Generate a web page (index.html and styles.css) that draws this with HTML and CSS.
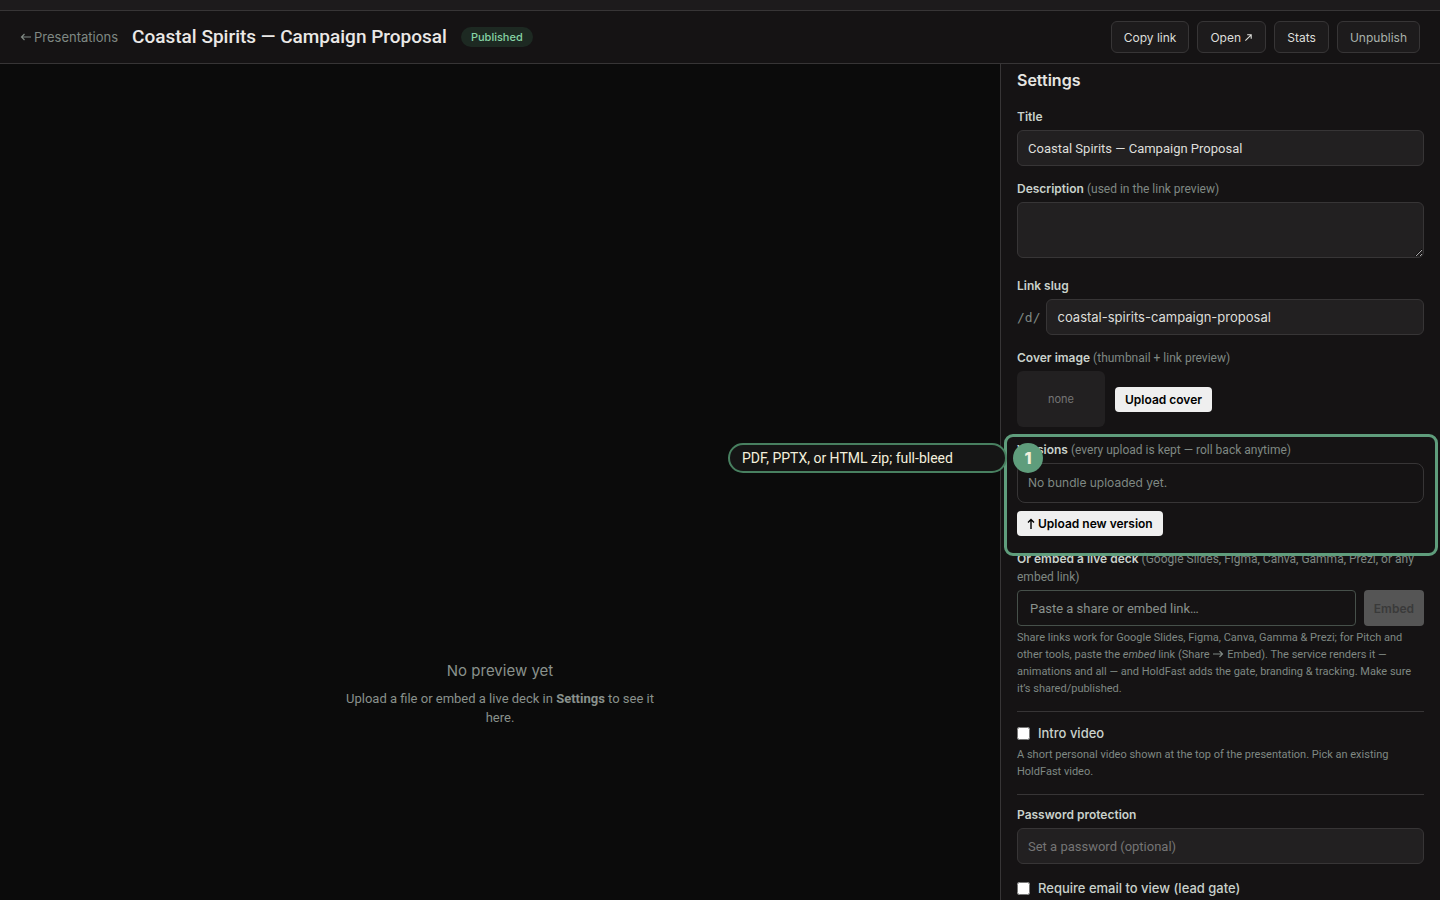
FILE: index.html
```html
<!DOCTYPE html>
<html lang="en">
<head>
<meta charset="utf-8">
<title>Coastal Spirits — Campaign Proposal</title>
<link rel="stylesheet" href="styles.css">
</head>
<body>
<div class="top-strip"></div>
<header class="bar">
  <a class="back" href="#"><svg class="arrow" viewBox="0 0 12 12"><path d="M11 6H1.5M4.5 3L1.5 6l3 3"/></svg>Presentations</a>
  <h1 class="bar-title">Coastal Spirits — Campaign Proposal</h1>
  <span class="badge">Published</span>
  <div class="actions">
    <button class="btn" type="button">Copy link</button>
    <button class="btn" type="button">Open <svg class="arrow-out" viewBox="0 0 10 10"><path d="M1.5 8.5L8 2M3.5 2H8v4.5"/></svg></button>
    <button class="btn" type="button">Stats</button>
    <button class="btn btn-muted" type="button">Unpublish</button>
  </div>
</header>
<main class="workspace">
  <section class="stage">
    <div class="empty">
      <h2 class="empty-title">No preview yet</h2>
      <p class="empty-text">Upload a file or embed a live deck in <strong>Settings</strong> to see it here.</p>
    </div>
  </section>
  <aside class="panel">
    <h2 class="panel-title">Settings</h2>
    <div class="field">
      <label class="label" for="title">Title</label>
      <input class="input" id="title" type="text" value="Coastal Spirits — Campaign Proposal">
    </div>
    <div class="field field-area">
      <label class="label" for="desc">Description <span class="hint">(used in the link preview)</span></label>
      <textarea class="input area" id="desc"></textarea>
    </div>
    <div class="field">
      <label class="label" for="slug">Link slug</label>
      <div class="row slug-row">
        <span class="prefix">/d/</span>
        <input class="input slug-input" id="slug" type="text" value="coastal-spirits-campaign-proposal">
      </div>
    </div>
    <div class="field">
      <div class="label">Cover image <span class="hint">(thumbnail + link preview)</span></div>
      <div class="row cover-row">
        <div class="thumb">none</div>
        <button class="solid" type="button">Upload cover</button>
      </div>
    </div>
    <div class="field versions">
      <div class="label">Versions <span class="hint">(every upload is kept — roll back anytime)</span></div>
      <div class="bundle">No bundle uploaded yet.</div>
      <button class="solid upload" type="button"><svg class="arrow-up" viewBox="0 0 8 12"><path d="M4 11V1.5M1 4.5l3-3 3 3"/></svg>Upload new version</button>
      <div class="callout">
        <span class="callout-num">1</span>
        <span class="callout-text">PDF, PPTX, or HTML zip; full-bleed</span>
      </div>
    </div>
    <div class="field">
      <label class="label" for="embed">Or embed a live deck <span class="hint">(Google Slides, Figma, Canva, Gamma, Prezi, or any embed link)</span></label>
      <div class="row embed-row">
        <input class="input outline" id="embed" type="text" placeholder="Paste a share or embed link…">
        <button class="solid" type="button" disabled>Embed</button>
      </div>
      <p class="help">Share links work for Google Slides, Figma, Canva, Gamma &amp; Prezi; for Pitch and other tools, paste the <em>embed</em> link (Share <svg class="arrow-right" viewBox="0 0 12 8"><path d="M1 4h9.5M7.5 1l3 3-3 3"/></svg> Embed). The service renders it — animations and all — and HoldFast adds the gate, branding &amp; tracking. Make sure it’s shared/published.</p>
    </div>
    <div class="field ruled">
      <label class="check"><input type="checkbox">Intro video</label>
      <p class="help">A short personal video shown at the top of the presentation. Pick an existing HoldFast video.</p>
    </div>
    <div class="field ruled">
      <label class="label" for="pass">Password protection</label>
      <input class="input" id="pass" type="text" placeholder="Set a password (optional)">
    </div>
    <label class="check"><input type="checkbox">Require email to view (lead gate)</label>
  </aside>
</main>
</body>
</html>
```
FILE: styles.css
```css
* { box-sizing: border-box; }
body {
  margin: 0;
  height: 100vh;
  overflow: hidden;
  display: flex;
  flex-direction: column;
  background: #0b0b0b;
  color: #e6e6e2;
  font-family: Inter, "Liberation Sans", sans-serif;
  font-size: 13px;
}
h1, h2, p { margin: 0; }
button, input, textarea { font-family: inherit; }
svg { fill: none; stroke: currentColor; stroke-width: 1.2; }
.bar-title, .hint, .help, .input, .empty-text { font-family: Roboto, "Liberation Sans", sans-serif; }
.top-strip { flex: none; height: 10px; background: #1d1b1c; }
.bar {
  flex: none;
  display: flex;
  align-items: center;
  height: 54px;
  padding: 0 20px;
  gap: 14px;
  background: #151314;
  border-top: 1px solid #373536;
  border-bottom: 1px solid #373536;
}
.back { display: flex; align-items: center; gap: 2px; color: #7f8883; font-size: 13px; text-decoration: none; }
.arrow { width: 12px; height: 12px; }
.bar-title { font-size: 19px; font-weight: 500; line-height: 24px; color: #eae8e6; }
.badge {
  padding: 0 10px;
  border-radius: 10px;
  background: #1d2922;
  color: #86d3a5;
  font-size: 11px;
  font-weight: 500;
  line-height: 20px;
}
.actions { display: flex; gap: 8px; margin-left: auto; }
.btn {
  height: 32px;
  padding: 0 12px;
  border: 1px solid #373536;
  border-radius: 6px;
  background: #1d1b1c;
  color: #dededa;
  font-size: 12px;
}
.btn-muted { color: #a9b1ab; }
.arrow-out { width: 9px; height: 9px; }
.workspace { flex: 1; min-height: 0; display: flex; }
.stage { flex: 1; display: flex; justify-content: center; padding-top: 596px; text-align: center; color: #89918c; }
.empty { width: 320px; }
.empty-title { font-size: 15px; font-weight: 400; line-height: 22px; color: #89918c; }
.empty-text { margin-top: 7px; font-size: 13px; line-height: 19px; }
.panel {
  flex: none;
  width: 440px;
  padding: 4px 16px 0;
  background: #151314;
  border-left: 1px solid #373536;
}
.panel-title { font-size: 16px; font-weight: 600; line-height: 24px; margin-bottom: 16px; }
.field { margin-bottom: 14px; }
.field-area { margin-bottom: 19px; }
.label { display: block; margin-bottom: 4px; font-size: 12px; font-weight: 600; line-height: 18px; color: #c9d1cb; }
.hint { font-weight: 400; color: #7f8883; }
.input {
  display: block;
  width: 100%;
  height: 36px;
  padding: 0 10px;
  border: 1px solid #373536;
  border-radius: 6px;
  background: #222021;
  color: #dededa;
  font-size: 13px;
}
.input::placeholder { color: #757575; opacity: 1; }
.area { height: 56px; resize: vertical; }
.row { display: flex; align-items: center; }
.slug-row { gap: 6px; }
.slug-input { font-family: Inter, "Liberation Sans", sans-serif; }
.prefix { font-family: "DejaVu Sans Mono", monospace; font-size: 13px; color: #7f8883; }
.cover-row { gap: 10px; }
.thumb {
  display: grid;
  place-items: center;
  width: 88px;
  height: 56px;
  border-radius: 6px;
  background: #222021;
  color: #757575;
  font-size: 11px;
}
.solid {
  height: 25px;
  padding: 0 10px;
  border: 0;
  border-radius: 4px;
  background: #efefef;
  color: #000;
  font-size: 12px;
  font-weight: 600;
}
.solid:disabled { height: 36px; background: #555; color: #3a3a3a; }
.versions { position: relative; }
.bundle { padding: 0 10px; border: 1px solid #373536; border-radius: 8px; line-height: 38px; font-size: 12px; color: #7f8883; }
.upload { display: flex; align-items: center; gap: 3px; margin-top: 8px; }
.arrow-up { width: 8px; height: 12px; stroke-width: 1.4; }
.callout {
  position: absolute;
  top: -7px;
  right: -14px;
  bottom: -20px;
  left: -13px;
  border: 3px solid #5f9d7c;
  border-radius: 9px;
}
.callout-num {
  position: absolute;
  top: 6px;
  left: 6px;
  width: 30px;
  height: 30px;
  border-radius: 50%;
  background: #5f9d7c;
  color: #f3efdc;
  font-size: 16px;
  font-weight: 800;
  line-height: 30px;
  text-align: center;
}
.callout-text {
  position: absolute;
  top: 6px;
  right: 100%;
  width: 279px;
  padding: 0 12px;
  border: 2px solid #488060;
  border-radius: 15px;
  background: #151515;
  color: #f3efdc;
  font-family: Roboto, "Liberation Sans", sans-serif;
  font-size: 14px;
  line-height: 26px;
  white-space: nowrap;
}
.embed-row { gap: 8px; }
.outline { flex: 1; padding: 0 12px; border-color: #46504a; border-radius: 4px; background: transparent; }
.outline::placeholder { color: #89918c; }
.help { margin-top: 3px; font-size: 11px; line-height: 17px; color: #7f8883; }
.arrow-right { width: 12px; height: 8px; }
.ruled { padding-top: 11px; border-top: 1px solid #373536; }
.check { display: flex; align-items: center; gap: 8px; line-height: 20px; font-size: 13px; font-weight: 500; color: #c9d1cb; }
.check input { width: 13px; height: 13px; margin: 0; }
```
